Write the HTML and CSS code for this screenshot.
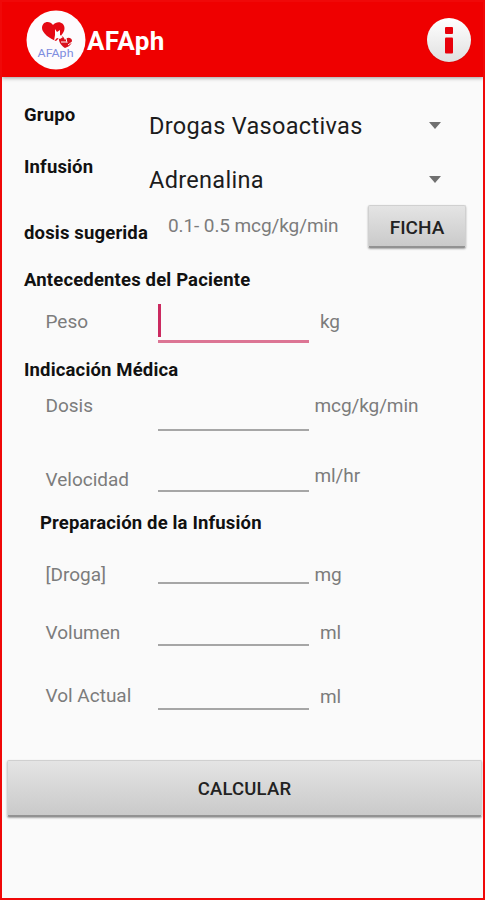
FILE: index.html
```
<!DOCTYPE html>
<html lang="es">
<head>
  <meta charset="UTF-8">
  <meta name="viewport" content="width=device-width, initial-scale=1.0">
  <title>AFAph</title>

  <link rel="stylesheet" href="styles.css">
</head>
<body>
  <div id="app">
    <header class="bar">
      <svg class="logo" width="60" height="60" viewBox="0 0 60 60">
        <circle cx="30" cy="30" r="29.5" fill="#fdfbfd"/>
        <path d="M30 31C24 29 16 23 16 18C16 11 24 10 27 15C31 10 38.500 12 38.500 18C38.500 22 36 25 30 31Z" fill="#e50914"/>
        <path d="M39 38C36 36 32 32 33 27C35 24 38 27 39 30C41 26 46.500 28 46 31C45.500 35 42 37 39 38Z" fill="#d9101c"/>
        <path d="M29 19l2 3 3-2 0 5 3 2-3 2-3-1-3 3 1-6z" fill="#fff"/>
        <path d="M35 32l5 0M40 28l1 5M42 35l4-3" stroke="#fff" stroke-width="1" fill="none"/>
        <text class="logo-text" x="11.5" y="47" textLength="36" lengthAdjust="spacingAndGlyphs">AFAph</text>
      </svg>
      <h1 class="title">AFAph</h1>
      <svg class="info" width="46" height="46" viewBox="0 0 46 46">
        <defs>
          <linearGradient id="shine" x1="0" y1="0" x2="0" y2="1">
            <stop offset="0" stop-color="#fff"/>
            <stop offset="1" stop-color="#e0e0e0"/>
          </linearGradient>
        </defs>
        <circle cx="23" cy="23.6" r="22.2" fill="#c40000" opacity=".5"/>
        <circle cx="23" cy="23" r="22" fill="url(#shine)"/>
        <rect x="19" y="10" width="8" height="7" rx="1" fill="#e8000a"/>
        <rect x="19" y="20.5" width="8" height="16" rx="1" fill="#e8000a"/>
      </svg>
    </header>

    <main>
      <div class="row grupo">
        <span class="label">Grupo</span>
        <div class="select"><span>Drogas Vasoactivas</span><i class="arrow"></i></div>
      </div>
      <div class="row infusion">
        <span class="label">Infusión</span>
        <div class="select"><span>Adrenalina</span><i class="arrow"></i></div>
      </div>
      <div class="row sugerida">
        <span class="label">dosis sugerida</span>
        <span class="hint">0.1- 0.5 mcg/kg/min</span>
        <button class="btn ficha">FICHA</button>
      </div>

      <h2 class="label antecedentes">Antecedentes del Paciente</h2>
      <div class="row peso">
        <span class="name">Peso</span>
        <div class="field active"><i class="caret"></i></div>
        <span class="unit">kg</span>
      </div>

      <h2 class="label indicacion">Indicación Médica</h2>
      <div class="row dosis">
        <span class="name">Dosis</span>
        <div class="field"></div>
        <span class="unit near">mcg/kg/min</span>
      </div>
      <div class="row velocidad">
        <span class="name">Velocidad</span>
        <div class="field"></div>
        <span class="unit near">ml/hr</span>
      </div>

      <h2 class="label preparacion">Preparación de la Infusión</h2>
      <div class="row droga">
        <span class="name">[Droga]</span>
        <div class="field"></div>
        <span class="unit near">mg</span>
      </div>
      <div class="row volumen">
        <span class="name">Volumen</span>
        <div class="field"></div>
        <span class="unit">ml</span>
      </div>
      <div class="row actual">
        <span class="name">Vol Actual</span>
        <div class="field"></div>
        <span class="unit">ml</span>
      </div>
    </main>

    <button class="btn calcular">CALCULAR</button>
  </div>
</body>
</html>
```
FILE: styles.css
```
* {
  margin: 0;
  padding: 0;
  box-sizing: border-box;
}

body {
  font-family: Roboto, "Liberation Sans", sans-serif;
  font-size: 19px;
  line-height: 24px;
  color: #7c7c7c;
  white-space: nowrap;
}

#app {
  width: 485px;
  height: 900px;
  border: 2px solid #f00808;
  background: #fafafa;
  overflow: hidden;
}

/* header */
.bar {
  display: flex;
  align-items: center;
  height: 75px;
  padding: 0 11px 0 24px;
  background: #ef0000;
  box-shadow: 0 1px 4px rgba(0,0,0,0.4);
}

.logo-text {
  font-size: 11.5px;
  fill: #7f8de0;
}

.title {
  margin-left: 1px;
  padding-top: 3px;
  font-size: 26px;
  font-weight: 700;
  letter-spacing: 0.4px;
  color: #fff;
}

.info {
  margin-left: auto;
}

/* form */
main {
  height: 683px;
}

.row {
  display: grid;
  grid-template-columns: 134px 151px 1fr;
  align-items: start;
  padding-left: 22px;
}

.label {
  font-size: 18.5px;
  font-weight: 700;
  line-height: 24px;
  letter-spacing: 0.16px;
  color: #111;
}

h2.label {
  padding-left: 22px;
}

.name {
  padding-left: 21.5px;
}

.unit {
  padding-left: 11px;
  letter-spacing: -0.1px;
}

.unit.near {
  padding-left: 5.5px;
}

.field {
  border-bottom: 2px solid #a6a6a6;
}

.field.active {
  border-bottom: 3px solid #dc7594;
}

.caret {
  display: block;
  width: 3px;
  height: 33px;
  margin-top: 6px;
  background: #cb2a60;
}

.select {
  grid-column: 2 / 4;
  display: flex;
  justify-content: space-between;
  align-items: center;
  margin-left: -9px;
  padding-right: 42px;
  font-size: 23.5px;
  letter-spacing: 0.32px;
  color: #1c1c1c;
}

.arrow {
  margin-top: -2px;
  border: 6.5px solid transparent;
  border-top: 7px solid #707070;
  border-bottom: 0;
}

.btn {
  padding-top: 2px;
  font-family: inherit;
  font-weight: 500;
  color: #222;
  border: 1px solid #d0d0d0;
  border-bottom: 2px solid #929292;
  border-radius: 2px;
  background: linear-gradient(#e4e4e4, #cacaca);
  box-shadow: 0 1px 2px rgba(0,0,0,0.35);
}

.ficha {
  width: 98px;
  height: 43px;
  margin-top: 7px;
  font-size: 19px;
}

.calcular {
  display: block;
  width: 475px;
  height: 57px;
  margin-left: 5px;
  font-size: 18.5px;
  letter-spacing: 0.2px;
}

/* vertical rhythm of the rows */
.grupo { height: 65px; padding-top: 26px; }
.grupo .select { padding-top: 11px; }
.infusion { height: 56px; padding-top: 13px; }
.infusion .select { padding-top: 13px; }

.sugerida { grid-template-columns: 144px 200px 98px; height: 62px; }
.sugerida .label { padding-top: 23px; }
.sugerida .hint { padding-top: 16px; letter-spacing: -0.1px; }

.antecedentes { height: 38px; padding-top: 8px; }
.peso { height: 52px; }
.peso .name, .peso .unit { padding-top: 12px; }
.peso .field { height: 45px; }

.indicacion { height: 34px; padding-top: 8px; }
.dosis { height: 62px; }
.dosis .name, .dosis .unit { padding-top: 10px; }
.dosis .field { height: 47px; }

.velocidad { height: 56px; }
.velocidad .name { padding-top: 22px; }
.velocidad .unit { padding-top: 18px; }
.velocidad .field { height: 46px; }

h2.preparacion { height: 44px; padding: 9px 0 0 38px; }
.droga { height: 54px; }
.droga .name, .droga .unit { padding-top: 17px; }
.droga .field { height: 38px; }

.volumen { height: 60px; }
.volumen .name, .volumen .unit { padding-top: 21px; }
.volumen .field { height: 46px; }

.actual { height: 100px; }
.actual .name { padding-top: 24px; }
.actual .unit { padding-top: 25px; }
.actual .field { height: 50px; }
```
